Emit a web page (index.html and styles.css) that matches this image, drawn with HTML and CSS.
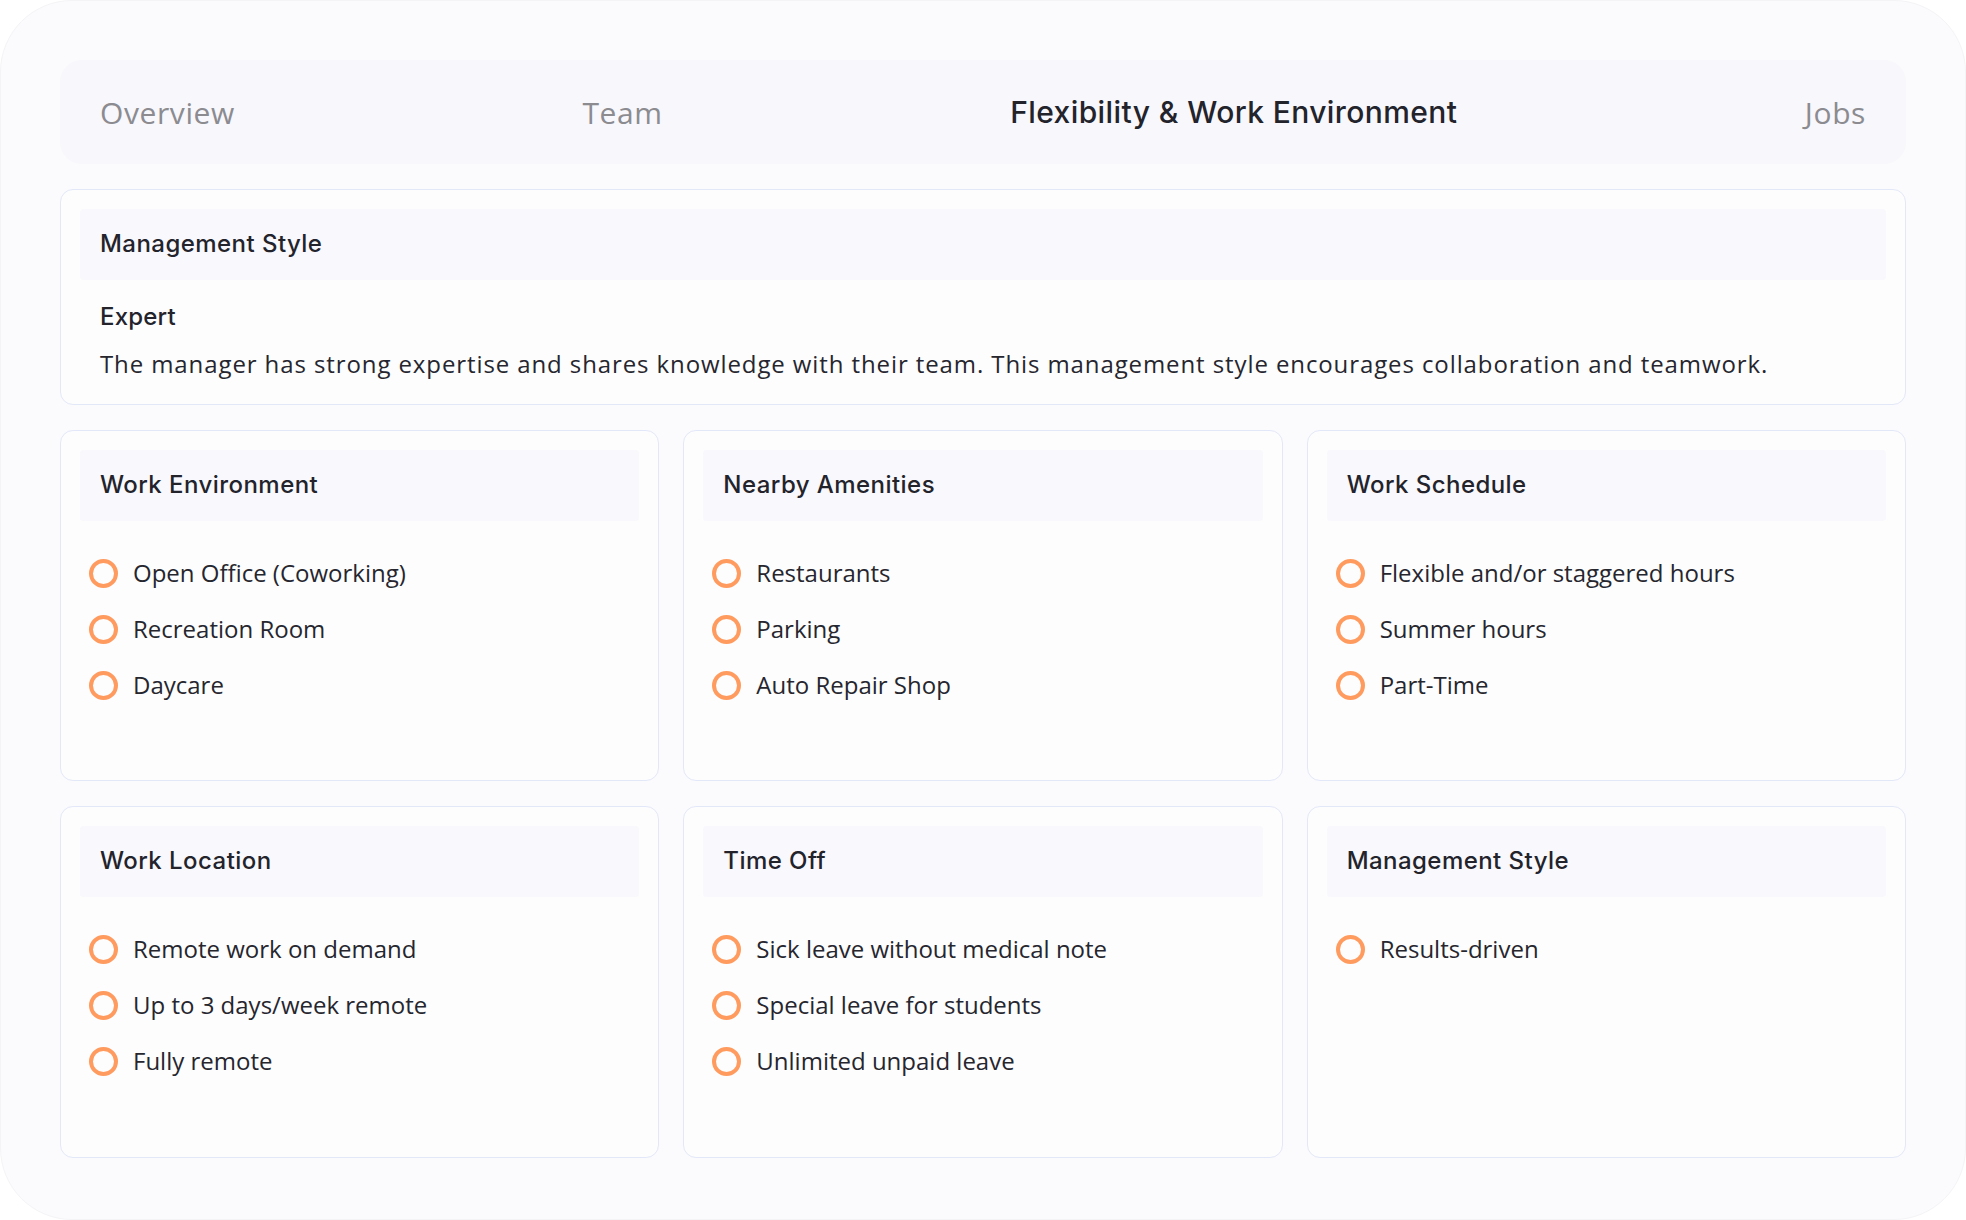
FILE: index.html
```html
<!DOCTYPE html>
<html lang="en">
<head>
<meta charset="utf-8">
<title>Flexibility &amp; Work Environment</title>
<link rel="stylesheet" href="styles.css">
</head>
<body>
<div class="frame">
  <nav class="tabs">
    <span class="tab">Overview</span>
    <span class="tab">Team</span>
    <span class="tab active">Flexibility &amp; Work Environment</span>
    <span class="tab">Jobs</span>
  </nav>

  <section class="card wide">
    <div class="card-head">Management Style</div>
    <div class="style-name">Expert</div>
    <p class="style-desc">The manager has strong expertise and shares knowledge with their team. This management style encourages collaboration and teamwork.</p>
  </section>

  <div class="grid">
    <section class="card">
      <div class="card-head">Work Environment</div>
      <ul class="list">
        <li>Open Office (Coworking)</li>
        <li>Recreation Room</li>
        <li>Daycare</li>
      </ul>
    </section>
    <section class="card">
      <div class="card-head">Nearby Amenities</div>
      <ul class="list">
        <li>Restaurants</li>
        <li>Parking</li>
        <li>Auto Repair Shop</li>
      </ul>
    </section>
    <section class="card">
      <div class="card-head">Work Schedule</div>
      <ul class="list">
        <li>Flexible and/or staggered hours</li>
        <li>Summer hours</li>
        <li>Part-Time</li>
      </ul>
    </section>
    <section class="card">
      <div class="card-head">Work Location</div>
      <ul class="list">
        <li>Remote work on demand</li>
        <li>Up to 3 days/week remote</li>
        <li>Fully remote</li>
      </ul>
    </section>
    <section class="card">
      <div class="card-head">Time Off</div>
      <ul class="list">
        <li>Sick leave without medical note</li>
        <li>Special leave for students</li>
        <li>Unlimited unpaid leave</li>
      </ul>
    </section>
    <section class="card">
      <div class="card-head">Management Style</div>
      <ul class="list">
        <li>Results-driven</li>
      </ul>
    </section>
  </div>
</div>
</body>
</html>
```

FILE: styles.css
```css
* { box-sizing: border-box; }

html, body {
  margin: 0;
  padding: 0;
  background: #ffffff;
}

body {
  font-family: "Open Sans", "Noto Sans", sans-serif;
  color: #26262e;
}

.frame {
  width: 1966px;
  height: 1220px;
  border-radius: 72px;
  background: #fbfbfd;
  border: 1px solid #f4f4f7;
  padding: 59px 59px 0;
}

.tabs {
  height: 104px;
  border-radius: 22px;
  background: #f7f7fc;
  display: flex;
  align-items: center;
  justify-content: space-between;
  padding: 0 40px 0 40px;
}

.tab {
  font-size: 30px;
  color: #8b8b90;
  letter-spacing: 0.6px;
}

.tab.active {
  font-family: "Inter", "Open Sans", sans-serif;
  color: #23232b;
  font-weight: 500;
  font-size: 30px;
  letter-spacing: 0.4px;
}

.card {
  border: 1px solid #e3e8f8;
  border-radius: 13px;
  background: #fdfdfe;
  padding: 19px 19px 0;
}

.card.wide {
  margin-top: 25px;
  height: 216px;
}

.card-head {
  height: 71px;
  background: #f8f8fd;
  border-radius: 4px;
  display: flex;
  align-items: center;
  padding: 0 0 3px 20px;
  font-family: "Inter", "Open Sans", sans-serif;
  font-size: 24px;
  font-weight: 500;
  letter-spacing: 0.45px;
  color: #23232b;
}

.style-name {
  margin-top: 20px;
  padding-left: 20px;
  font-family: "Inter", "Open Sans", sans-serif;
  font-size: 24px;
  line-height: 34px;
  font-weight: 500;
  letter-spacing: 0.2px;
  color: #23232b;
}

.style-desc {
  margin: 13px 0 0;
  padding-left: 20px;
  font-size: 24px;
  line-height: 34px;
  letter-spacing: 0.9px;
}

.grid {
  margin-top: 25px;
  display: grid;
  grid-template-columns: repeat(3, 1fr);
  grid-template-rows: 351px 352px;
  column-gap: 24px;
  row-gap: 25px;
}

.list {
  list-style: none;
  margin: 0;
  padding: 35px 0 0 9px;
  display: flex;
  flex-direction: column;
  gap: 22px;
}

.list li {
  display: flex;
  align-items: center;
  gap: 15px;
  font-size: 24px;
  line-height: 34px;
}

.list li::before {
  content: "";
  width: 21px;
  height: 21px;
  border: 4px solid #ff9b5e;
  border-radius: 50%;
  flex: none;
}
```
